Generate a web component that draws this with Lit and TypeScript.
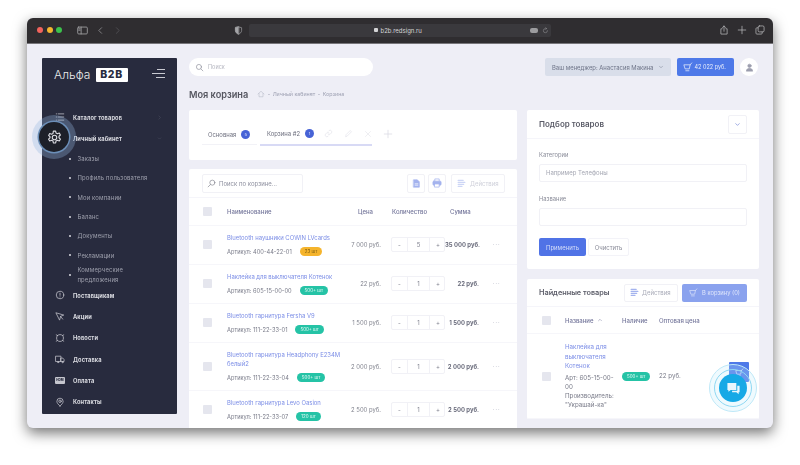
import { LitElement, html, css, svg } from "lit";
import { customElement } from "lit/decorators.js";

const ic = (body: unknown, size = 11, vb = 16) => html`<svg class="ic" width=${size} height=${size} viewBox="0 0 ${vb} ${vb}" fill="none" stroke="currentColor" stroke-width="1.2" stroke-linecap="round" stroke-linejoin="round">${body}</svg>`;

const icons = {
  list: svg`<path d="M5 3h9M5 8h9M5 13h9M2 3h.5M2 8h.5M2 13h.5"/>`,
  gear: svg`<circle cx="8" cy="8" r="2.4"/><path d="M6.8 1.2h2.4l.4 2 1.5.8 2-.7 1.2 2-1.5 1.4v1.6l1.5 1.4-1.2 2-2-.7-1.5.8-.4 2H6.8l-.4-2-1.5-.8-2 .7-1.2-2 1.5-1.4V7.2L1.7 5.8l1.2-2 2 .7 1.5-.8z"/>`,
  info: svg`<circle cx="8" cy="8" r="6"/><path d="M8 5v3.5M8 11v.2"/>`,
  plane: svg`<path d="M2 3l12 3.5-5 2-1.5 5.5z"/><path d="M8.8 8.5l3.5 4.5"/>`,
  news: svg`<path d="M4 4c2-2 6-2 8 0 2 2 2 6 0 8-2 2-6 2-8 0-2-2-2-6 0-8zM2 3l2 1M14 3l-2 1M2 13l2-1M14 13l-2-1"/>`,
  truck: svg`<path d="M1.5 3.5h8v8.5h-8zM9.5 6.5h3l2 2.5v3h-5z"/><circle cx="5" cy="13" r="1"/><circle cx="12" cy="13" r="1"/>`,
  pin: svg`<path d="M8 14.5c-3-2.8-5-5-5-7.6a5 5 0 0 1 10 0c0 2.6-2 4.8-5 7.6z"/><circle cx="8" cy="6.8" r="2"/>`,
  home: svg`<path d="M2 8l6-5.5L14 8M4 7v6.5h8V7"/>`,
  link: svg`<path d="M7 9a3 3 0 0 0 4.2 0l2-2A3 3 0 0 0 9 2.800l-1 1M9 7a3 3 0 0 0-4.200 0l-2 2A3 3 0 0 0 7 13.200l1-1"/>`,
  pencil: svg`<path d="M3 13l.7-3L11 2.700l2.300 2.300L6 12.300z"/>`,
  cross: svg`<path d="M3 3l10 10M13 3L3 13"/>`,
  plus: svg`<path d="M8 2v12M2 8h12"/>`,
  search: svg`<circle cx="9.500" cy="6.500" r="4.500"/><path d="M6 10l-4 4"/>`,
  search2: svg`<circle cx="7" cy="7" r="4.500"/><path d="M10.500 10.500L14 14"/>`,
  cart: svg`<path d="M2 4.500h9.500L10 11H4zM11.500 4.500L14 1.500M4.500 14h5"/>`,
  user: svg`<circle cx="8" cy="5" r="3" fill="currentColor"/><path d="M2.500 14c0-3 2.500-4.500 5.500-4.500s5.500 1.500 5.500 4.500z" fill="currentColor"/>`,
  chevD: svg`<path d="M4 6l4 4 4-4"/>`,
  chevU: svg`<path d="M4 10l4-4 4 4"/>`,
  chevR: svg`<path d="M6 3l5 5-5 5"/>`,
  chevL: svg`<path d="M10 3L5 8l5 5"/>`,
  doc: svg`<path d="M3 1.500h6.500L13 5v9.500H3z" fill="currentColor"/><path d="M5.500 8.500h5M5.500 11h5" stroke="#fff"/>`,
  print: svg`<path d="M4.500 5V1.500h7V5" /><rect x="1.500" y="5" width="13" height="6.500" rx="1.500" fill="currentColor"/><path d="M4.500 9.500h7v5h-7z" fill="#fff"/>`,
  lines: svg`<path d="M2 2.500h9M2 6h12M2 9.500h10M2 13h7" stroke-width="2"/>`,
  sidebar: svg`<rect x="1" y="3" width="14" height="10" rx="1.500"/><path d="M6 3v10M2.500 5.500h2M2.500 7.500h2"/>`,
  shield: svg`<path d="M8 1.500l5.500 1.500v5c0 3-2.500 5.500-5.500 6.500-3-1-5.500-3.500-5.500-6.500V3z"/><path d="M8 1.500l-5.500 1.500v5c0 3 2.500 5.500 5.500 6.500z" fill="currentColor"/>`,
  share: svg`<path d="M5 6H3v8.500h10V6h-2M8 10V1.500M5.500 4L8 1.500 10.500 4"/>`,
  copy: svg`<rect x="5" y="1.500" width="9.500" height="9.500" rx="2"/><path d="M5 4.500H3a1.500 1.500 0 0 0-1.500 1.500v7A1.500 1.500 0 0 0 3 14.500h7a1.500 1.500 0 0 0 1.500-1.500v-2"/>`,
  reload: svg`<path d="M12.500 8.500A4.700 4.700 0 1 1 8 3.700h2M8.500 1.500L10.500 3.700 8.500 5.500"/>`,
  chat: svg`<path d="M1.500 2h9.500v7.500H5L2.500 11.500V9.500h-1z" fill="currentColor" stroke="none"/><path d="M12 5h2.500v7h-1v2l-2.500-2H6.500v-1.500H12z" fill="currentColor" stroke="none"/>`,
};

type Item = { t: string; i?: unknown; sub?: boolean; chev?: unknown; wrap?: boolean };
const menu: Item[] = [
  { t: "Каталог товаров", i: icons.list, chev: icons.chevR },
  { t: "Личный кабинет", chev: icons.chevD },
  { t: "Заказы", sub: true },
  { t: "Профиль пользователя", sub: true },
  { t: "Мои компании", sub: true },
  { t: "Баланс", sub: true },
  { t: "Документы", sub: true },
  { t: "Рекламации", sub: true },
  { t: "Коммерческие предложения", sub: true, wrap: true },
  { t: "Поставщикам", i: icons.info },
  { t: "Акции", i: icons.plane },
  { t: "Новости", i: icons.news },
  { t: "Доставка", i: icons.truck },
  { t: "Оплата", i: "hdm" },
  { t: "Контакты", i: icons.pin },
];

const rows = [
  { n: "Bluetooth наушники COWIN LVcards", a: "400-44-22-01", b: "23 шт", c: "am", p: "7 000 руб.", q: 5, s: "35 000 руб." },
  { n: "Наклейка для выключателя Котенок", a: "605-15-00-00", b: "500+ шт", c: "gr", p: "22 руб.", q: 1, s: "22 руб." },
  { n: "Bluetooth гарнитура Fersha V9", a: "111-22-33-01", b: "500+ шт", c: "gr", p: "1 500 руб.", q: 1, s: "1 500 руб." },
  { n: "Bluetooth гарнитура Headphony E234M белый2", a: "111-22-33-04", b: "500+ шт", c: "gr", p: "2 000 руб.", q: 1, s: "2 000 руб." },
  { n: "Bluetooth гарнитура Levo Oasion", a: "111-22-33-07", b: "120 шт", c: "gr", p: "2 500 руб.", q: 1, s: "2 500 руб." },
];

@customElement("app-root")
export class AppRoot extends LitElement {
  static styles = css`
    :host { display: block; width: 800px; height: 465px; background: #fff; overflow: hidden; font-family: Inter, "Noto Sans", sans-serif; }
    * { box-sizing: border-box; }
    .ic { display: block; flex: none; }
    .stage { padding: 18px 27px; height: 465px; filter: blur(0.55px); }
    .win { position: relative; height: 410px; border-radius: 6px; overflow: hidden; background: #eeeef6; box-shadow: 0 5px 14px rgba(0,0,0,.55); }
    .bar { height: 25.5px; background: #2f2d30; border-bottom: 1px solid #77767a; display: flex; align-items: center; color: #a5a5a8; position: relative; }
    .dots { display: flex; gap: 3.6px; margin-left: 10px; }
    .dots i { width: 6px; height: 6px; border-radius: 50%; display: block; }
    .sb { margin-left: 15px; }
    .chevs { display: flex; gap: 8px; margin-left: 8px; }
    .chevs .off { color: #5c5b5f; }
    .sh { margin-left: 112px; }
    .url { margin-left: 6px; width: 302px; height: 13px; border-radius: 2px; background: #3a393d; display: flex; align-items: center; position: relative; font-size: 6px; color: #d4d4d6; justify-content: center; gap: 2px; padding-right: 4px; }
    .lock { width: 4px; height: 4px; background: #d4d4d6; border-radius: 1px; }
    .urlr { position: absolute; right: 2px; display: flex; gap: 4px; align-items: center; color: #9c9c9f; }
    .trans { width: 8px; height: 5px; border-radius: 2px; background: #9c9c9f; }
    .barr { margin-left: auto; display: flex; gap: 8px; margin-right: 8px; color: #b5b5b8; }
    .content { display: flex; gap: 12px; padding: 14.500px 14px 0 15px; align-items: flex-start; }
    .side { width: 135px; height: 356px; background: #282b3e; color: #d9dae0; flex: none; border-radius: 1px; }
    .logo { height: 48.500px; display: flex; align-items: flex-start; padding: 10px 12px 0 12px; font-size: 12px; }
    .logo .t { line-height: 14px; color: #eceded; letter-spacing: .1px; font-weight: 300; }
    .logo .b { margin-left: 5px; background: #fff; color: #282b3e; font-weight: 800; font-size: 10.500px; line-height: 14px; width: 32px; text-align: center; border-radius: 1px; letter-spacing: .6px; }
    .burger { margin-left: auto; margin-top: 1px; width: 13px; display: flex; flex-direction: column; align-items: flex-end; gap: 3px; }
    .burger i { display: block; height: 1px; background: #c9cad2; }
    .item { display: flex; align-items: center; height: 21.300px; font-size: 5.700px; font-weight: 700; padding-left: 13px; padding-right: 15px; color: #d9dae0; letter-spacing: .1px; }
    .ico { width: 18px; flex: none; color: #c5c6ce; }
    .item .chev { margin-left: auto; color: #5e6072; }
    .hdm { width: 10px; height: 7px; background: #c5c6ce; color: #282b3e; font-size: 3px; font-weight: 800; text-align: center; line-height: 7px; border-radius: 1px; }
    .item.sub { height: 19.350px; font-size: 5.900px; font-weight: 400; color: #9ea0ad; padding-left: 26.500px; line-height: 9.400px; letter-spacing: .15px; }
    .item.sub::before { content: ""; width: 2px; height: 2px; background: #d9dae0; border-radius: 50%; margin-right: 7px; flex: none; }
    .main { width: 570px; flex: none; }
    .top { display: flex; align-items: center; height: 18px; }
    .search { width: 184px; height: 18px; background: #fff; border-radius: 9px; display: flex; align-items: center; gap: 4px; padding-left: 6px; font-size: 5.500px; color: #b5b6c0; }
    .search .ic { color: #8d8f9b; }
    .mgr { margin-left: auto; width: 126px; height: 18px; background: #d9deea; border-radius: 2px; display: flex; align-items: center; justify-content: space-between; padding: 0 7px; font-size: 5.900px; color: #6e7488; white-space: nowrap; }
    .money { margin-left: 6px; width: 57px; height: 18px; background: #4e79e8; border-radius: 2px; color: #e8edfb; display: flex; align-items: center; gap: 1.500px; padding-left: 6px; font-size: 5.500px; white-space: nowrap; }
    .ava { margin-left: 6px; margin-right: 1px; width: 18px; height: 18px; border-radius: 50%; background: #fff; color: #9c9eae; display: flex; align-items: center; justify-content: center; }
    .head { display: flex; align-items: center; height: 18px; margin-top: 9px; margin-bottom: 7px; gap: 9px; }
    .head h1 { margin: 0; font-size: 9.200px; font-weight: 600; color: #54555f; }
    .crumbs { display: flex; align-items: center; gap: 2.500px; font-size: 5.300px; color: #9da0b2; }
    .crumbs .ic { color: #b9bcc9; }
    .cols { display: flex; gap: 10px; align-items: flex-start; }
    .l { width: 328px; flex: none; }
    .r { width: 232px; flex: none; }
    .card { background: #fff; border-radius: 2px; }
    .tabs { height: 50px; margin-bottom: 9px; padding: 14px 0 0 13px; display: flex; align-items: flex-start; }
    .tab { display: flex; align-items: center; height: 21px; border-bottom: 1px solid #f2f2f7; font-size: 5.900px; color: #6c6e7d; padding-left: 6px; width: 55px; gap: 5px; margin-right: 3px; white-space: nowrap; }
    .tab.on { width: 112px; border-bottom: 2px solid #d8daf5; padding-left: 7px; margin-right: 0; height: 21.500px; }
    .num { width: 9px; height: 9px; border-radius: 50%; background: #4763d6; color: #dfe4fa; font-size: 4px; line-height: 9px; text-align: center; flex: none; }
    .tg { color: #e2e3ea; margin-left: 5px; }
    .tg + .tg { margin-left: 6px; }
    .tplus { color: #d9dae3; margin: 5px 0 0 11px; }
    .tool { display: flex; align-items: center; height: 29px; border-bottom: 1px solid #f5f5fa; padding-left: 13px; padding-right: 12px; }
    .q { width: 101px; height: 19px; border: 1px solid #f1f1f6; border-radius: 2px; display: flex; align-items: center; gap: 3px; padding-left: 4px; font-size: 6px; color: #8d8f9e; }
    .q .ic { color: #83858f; }
    .ib { width: 18px; height: 19px; border: 1px solid #f1f1f6; border-radius: 2px; display: flex; align-items: center; justify-content: center; color: #a4b3ee; margin-left: 3px; }
    .ib.first { margin-left: auto; }
    .act { width: 54px; height: 19px; border: 1px solid #f1f1f6; border-radius: 2px; display: flex; align-items: center; gap: 4px; padding-left: 5px; font-size: 6px; color: #cfd0da; margin-left: 5px; font-weight: 400; }
    .act .ic { color: #cdd6f6; }
    .grid { display: grid; grid-template-columns: 24px 115px 39px 10px 54px 34px 36px; padding-left: 14px; align-items: center; border-bottom: 1px solid #f6f6fa; }
    .thead { height: 27.500px; font-size: 6px; font-weight: 500; color: #73759a; }
    .ck { width: 9px; height: 9px; background: #e5e6ee; border-radius: 1px; display: block; }
    .th-p { grid-column: 3; padding-left: 16px; white-space: nowrap; }
    .th-q { grid-column: 5; padding-left: 1px; white-space: nowrap; }
    .th-s { grid-column: 6; padding-left: 5px; }
    .row { padding: 7.500px 0 7.500px 14px; font-size: 5.900px; }
    .nm { display: flex; flex-direction: column; gap: 4px; grid-column: 2 / span 1; white-space: normal; }
    .nm a { color: #7b8de6; line-height: 9px; font-size: 5.900px; }
    .art { display: flex; align-items: center; height: 10px; color: #787a88; font-size: 5.700px; gap: 8px; white-space: nowrap; }
    .bdg { height: 9px; border-radius: 4.500px; padding: 0 5px; font-size: 4.500px; line-height: 9px; color: #e9fbf7; background: #25c3a6; white-space: nowrap; display: inline-block; }
    .bdg.am { background: #f5b42c; color: #7a5a10; }
    .pr { text-align: right; color: #82848f; white-space: nowrap; }
    .qty { grid-column: 5; display: grid; grid-template-columns: 15px 22px 17px; height: 15px; border: 1px solid #f1f1f6; border-radius: 2px; font-size: 6px; text-align: center; line-height: 13px; color: #7d7f8c; }
    .qty span + span { border-left: 1px solid #f1f1f6; }
    .sum { text-align: right; font-weight: 700; color: #6a6c7c; white-space: nowrap; }
    .more { text-align: center; color: #c5c6d2; font-size: 7px; letter-spacing: .6px; padding-right: 1px; }
    .filter { height: 159px; margin-bottom: 10px; }
    .chead { height: 29px; display: flex; align-items: center; padding: 0 12px; border-bottom: 1px solid #f5f5fa; font-size: 8px; font-weight: 600; color: #5a5b67; }
    .cbtn { margin-left: auto; width: 19px; height: 19px; border: 1px solid #f1f1f6; border-radius: 2px; display: flex; align-items: center; justify-content: center; color: #4a63c9; }
    .form { padding: 11px 12px 0; display: flex; flex-direction: column; }
    label { font-size: 5.800px; color: #8a8c99; line-height: 9px; margin-bottom: 4.500px; }
    .inp { height: 18px; border: 1px solid #f1f1f6; border-radius: 2px; font-size: 6px; color: #a4a6b2; display: flex; align-items: center; padding-left: 6px; margin-bottom: 12.500px; }
    .btns { display: flex; margin-top: 0; gap: 2px; }
    .apply { width: 47px; height: 18px; background: #5073e6; border-radius: 2px; font-size: 6px; color: #d6dff9; display: flex; align-items: center; justify-content: center; }
    .clear { width: 41px; height: 18px; border: 1px solid #f3f3f8; border-radius: 2px; font-size: 6px; color: #8a8c99; display: flex; align-items: center; justify-content: center; }
    .found .chead { height: 28px; gap: 4px; font-size: 7.300px; }
    .found .act { margin-left: auto; height: 18px; color: #a9abb8; gap: 3px; padding-left: 5px; }
    .found .act .ic { color: #a4b3ee; }
    .tocart { width: 65px; height: 18px; background: #8aa2ee; border-radius: 2px; display: flex; align-items: center; gap: 4px; padding-left: 7px; font-size: 5.800px; font-weight: 400; color: #dfe6fb; white-space: nowrap; }
    .fgrid { display: grid; grid-template-columns: 23px 57px 37px 70px 20px; padding-left: 15px; align-items: center; }
    .fhead { height: 27px; font-size: 6px; font-weight: 500; color: #73759a; border-bottom: 1px solid #f6f6fa; white-space: nowrap; }
    .fsort { display: flex; align-items: center; gap: 4px; }
    .frow { height: 85px; border-bottom: 1px solid #f6f6fa; font-size: 6.200px; color: #787a88; line-height: 9.300px; }
    .fn { padding-right: 8px; }
    .fn a { color: #7b8de6; display: block; margin-bottom: 2.500px; }
    .fcart { width: 20px; height: 20px; background: #4e79e8; border-radius: 1px; color: #dfe6fb; display: flex; align-items: center; justify-content: center; margin-top: -8px; }
    .gearw { position: absolute; left: 5px; top: 97px; width: 44px; height: 44px; border-radius: 50%; background: rgba(150,185,225,.32); display: flex; align-items: center; justify-content: center; }
    .gearw .c { width: 30px; height: 30px; border-radius: 50%; background: #1d2029; box-shadow: 0 0 0 1.500px #6c8fb8; display: flex; align-items: center; justify-content: center; color: #d9dae0; }
    .chatw { position: absolute; left: 682px; top: 346px; width: 48px; height: 48px; border-radius: 50%; border: 1px solid #bfe9f8; display: flex; align-items: center; justify-content: center; background: rgba(190,235,250,.25); }
    .chatw .m { width: 38px; height: 38px; border-radius: 50%; border: 1px solid #8fd8f3; display: flex; align-items: center; justify-content: center; }
    .chatw .c { width: 28px; height: 28px; border-radius: 50%; background: #16a9e6; color: #eaf7fd; display: flex; align-items: center; justify-content: center; }
  `;

  render() {
    return html`<div class="stage"><div class="win">
      <div class="bar">
        <div class="dots"><i style="background:#f2635c"></i><i style="background:#f6b62f"></i><i style="background:#3cc24c"></i></div>
        <div class="sb">${ic(icons.sidebar, 11)}</div>
        <div class="chevs">${ic(icons.chevL, 9)}<span class="off">${ic(icons.chevR, 9)}</span></div>
        <div class="sh">${ic(icons.shield, 9)}</div>
        <div class="url"><span class="lock"></span>b2b.redsign.ru
          <div class="urlr"><span class="trans"></span>${ic(icons.reload, 7)}</div></div>
        <div class="barr">${ic(icons.share, 10)}${ic(icons.plus, 10)}${ic(icons.copy, 10)}</div>
      </div>
      <div class="content">
        <aside class="side">
          <div class="logo"><span class="t">Альфа</span><span class="b">B2B</span>
            <div class="burger"><i style="width:8px"></i><i style="width:13px"></i><i style="width:9px"></i></div></div>
          ${menu.map((m) => m.sub
            ? html`<div class="item sub"><span style="max-width:${m.wrap ? 60 : 100}px">${m.t}</span></div>`
            : html`<div class="item"><span class="ico">${m.i === "hdm" ? html`<div class="hdm">HDM</div>` : m.i ? ic(m.i, 10) : ""}</span>${m.t}
                ${m.chev ? html`<span class="chev">${ic(m.chev, 5)}</span>` : ""}</div>`)}
        </aside>
        <div class="main">
          <div class="top">
            <div class="search">${ic(icons.search2, 9)}Поиск</div>
            <div class="mgr">Ваш менеджер: Анастасия Макина ${ic(icons.chevD, 6)}</div>
            <div class="money">${ic(icons.cart, 10)}42 022 руб.</div>
            <div class="ava">${ic(icons.user, 9)}</div>
          </div>
          <div class="head"><h1>Моя корзина</h1>
            <div class="crumbs">${ic(icons.home, 8)}<span>-</span><span>Личный кабинет</span><span>-</span><span>Корзина</span></div></div>
          <div class="cols">
            <div class="l">
              <div class="card tabs">
                <div class="tab">Основная <span class="num">5</span></div>
                <div class="tab on">Корзина #2 <span class="num">1</span>
                  <span class="tg">${ic(icons.link, 9)}</span><span class="tg">${ic(icons.pencil, 9)}</span><span class="tg">${ic(icons.cross, 8)}</span></div>
                <div class="tplus">${ic(icons.plus, 10)}</div>
              </div>
              <div class="card">
                <div class="tool">
                  <div class="q">${ic(icons.search, 9)}Поиск по корзине...</div>
                  <div class="ib first">${ic(icons.doc, 9)}</div>
                  <div class="ib">${ic(icons.print, 10)}</div>
                  <div class="act">${ic(icons.lines, 9)}Действия</div>
                </div>
                <div class="grid thead"><span class="ck"></span><span>Наименование</span>
                  <span class="th-p">Цена</span><span class="th-q">Количество</span><span class="th-s">Сумма</span></div>
                ${rows.map((r) => html`<div class="grid row"><span class="ck"></span>
                  <div class="nm"><a>${r.n}</a><div class="art">Артикул: ${r.a} <span class="bdg ${r.c}">${r.b}</span></div></div>
                  <span class="pr">${r.p}</span>
                  <div class="qty"><span>-</span><span>${r.q}</span><span>+</span></div>
                  <span class="sum">${r.s}</span><span class="more">···</span></div>`)}
              </div>
            </div>
            <div class="r">
              <div class="card filter">
                <div class="chead">Подбор товаров<div class="cbtn">${ic(icons.chevD, 7)}</div></div>
                <div class="form">
                  <label>Категории</label><div class="inp">Например Телефоны</div>
                  <label>Название</label><div class="inp"></div>
                  <div class="btns"><div class="apply">Применить</div><div class="clear">Очистить</div></div>
                </div>
              </div>
              <div class="card found">
                <div class="chead">Найденные товары
                  <div class="act">${ic(icons.lines, 9)}Действия</div>
                  <div class="tocart">${ic(icons.cart, 9)}В корзину (0)</div></div>
                <div class="fgrid fhead"><span class="ck"></span><span class="fsort">Название ${ic(icons.chevU, 6)}</span><span>Наличие</span><span>Оптовая цена</span></div>
                <div class="fgrid frow"><span class="ck"></span>
                  <div class="fn"><a>Наклейка для выключателя Котенок</a>Арт: 605-15-00-00<br />Производитель: "Украшай-ка"</div>
                  <span><span class="bdg">500+ шт</span></span><span>22 руб.</span>
                  <div class="fcart">${ic(icons.cart, 9)}</div></div>
              </div>
            </div>
          </div>
        </div>
      </div>
      <div class="gearw"><div class="c">${ic(icons.gear, 15)}</div></div>
      <div class="chatw"><div class="m"><div class="c">${ic(icons.chat, 15)}</div></div></div>
    </div></div>`;
  }
}
